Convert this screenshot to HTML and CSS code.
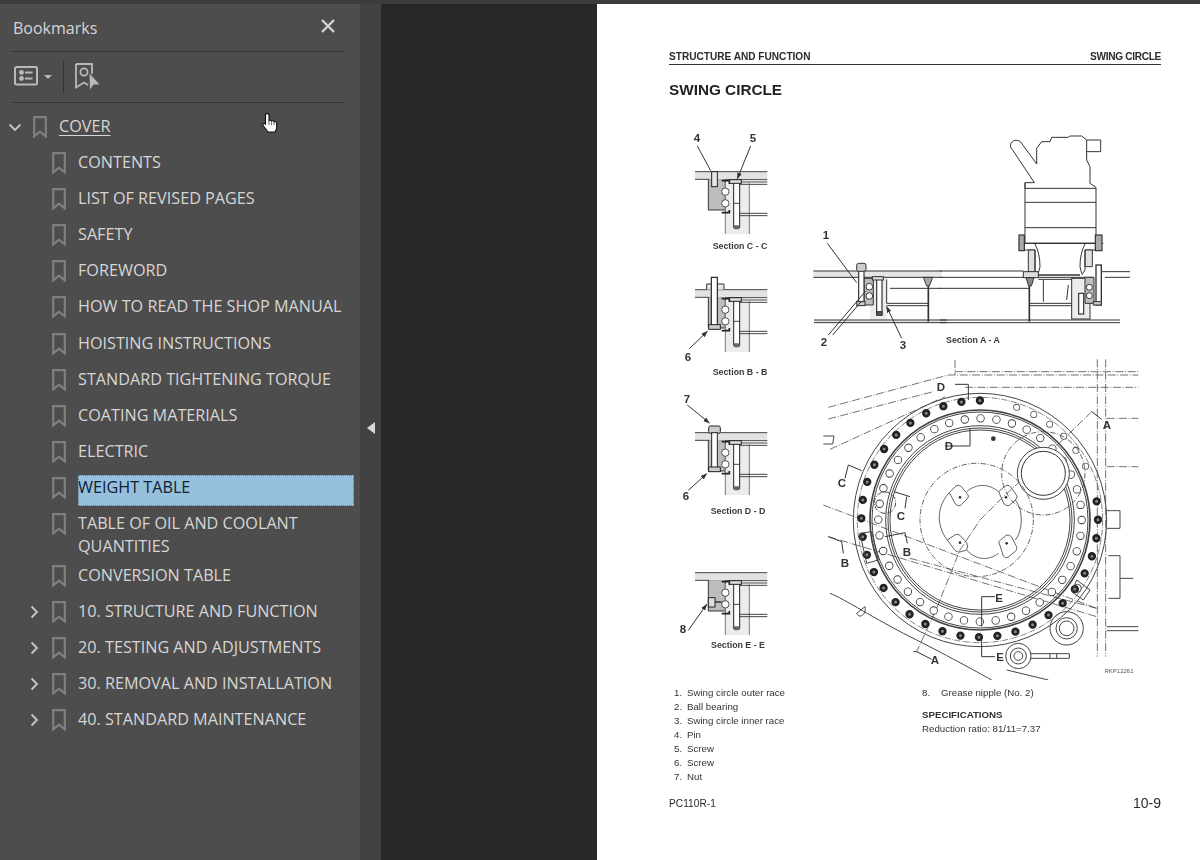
FILE: index.html
```html
<!DOCTYPE html>
<html lang="en">
<head>
<meta charset="utf-8">
<title>Bookmarks - Shop Manual</title>
<link rel="stylesheet" href="styles.css">
</head>
<body>
<svg class="defs" width="0" height="0" aria-hidden="true">
  <defs>
    <symbol id="bm" viewBox="0 0 14 22">
      <path d="M1.2 1.2H12.8V20.4L7 15.6 1.2 20.4Z" fill="none" stroke="#7f7f7f" stroke-width="2.2"/>
    </symbol>
    <marker id="ah" viewBox="0 0 10 10" refX="9" refY="5" markerWidth="20" markerHeight="20" orient="auto-start-reverse" markerUnits="userSpaceOnUse">
      <path d="M0 1.5L10 5 0 8.5Z" fill="#333"/>
    </marker>
    <g id="sec">
      <path d="M145 418H196V430H196V510H145Z" fill="#bdbdbd" stroke="#333" stroke-width="3"/>
      <rect x="196" y="430" width="72" height="152" fill="#ececec"/>
      <path d="M196 430V582M268 430V582" stroke="#777" stroke-width="3" fill="none"/>
      <rect x="105" y="395" width="217" height="24" fill="#e2e2e2"/>
      <path d="M105 395H322M105 418H148M196 419H322M240 426H322M240 433H322M240 520H322M240 527H322" stroke="#444" stroke-width="3" fill="none"/>
      <path d="M185 422H208V432M185 518H208V510" stroke="#222" stroke-width="5" fill="none"/>
      <circle cx="196" cy="455" r="11" fill="#fff" stroke="#333" stroke-width="2.5"/>
      <circle cx="196" cy="490" r="11" fill="#fff" stroke="#333" stroke-width="2.5"/>
      <rect x="221" y="420" width="18" height="142" fill="#fff" stroke="#222" stroke-width="3"/>
      <rect x="209" y="419" width="35" height="11" fill="#ddd" stroke="#222" stroke-width="3"/>
      <path d="M221 490H239" stroke="#222" stroke-width="2.5"/>
      <rect x="221" y="556" width="18" height="12" rx="4" fill="#666"/>
    </g>
  </defs>
</svg>

<div class="app">
  <div class="topbar"></div>
  <div class="main">
    <aside class="panel">
      <header class="panel-head">
        <h2 class="panel-title">Bookmarks</h2>
        <svg class="close" width="16" height="16" viewBox="0 0 16 16"><path d="M2 2L14 14M14 2L2 14" stroke="#d4d4d4" stroke-width="2.4" fill="none"/></svg>
      </header>
      <div class="toolbar">
        <svg class="tool-options" width="24" height="20" viewBox="0 0 24 20">
          <rect x="1" y="1" width="22" height="17.5" rx="1.5" fill="none" stroke="#b9b9b9" stroke-width="2"/>
          <circle cx="7.5" cy="6.5" r="2.4" fill="#b9b9b9"/><circle cx="7.5" cy="12.5" r="2.4" fill="#b9b9b9"/>
          <path d="M11 6.5H18.5M11 12.5H18.5" stroke="#b9b9b9" stroke-width="2"/>
        </svg>
        <span class="caret"></span>
        <span class="tool-sep"></span>
        <svg class="tool-find" width="25" height="27" viewBox="0 0 25 27">
          <path d="M1 1H17V11M1 1V24.500L9 19.500 13 22" fill="none" stroke="#b9b9b9" stroke-width="1.8"/>
          <circle cx="9" cy="9" r="3.6" fill="none" stroke="#b9b9b9" stroke-width="1.8"/>
          <path d="M14.500 10.500L24.500 21.500H18.500L15 26.500Z" fill="#b9b9b9"/>
        </svg>
      </div>
      <ul class="tree">
        <li class="row"><svg class="chev" width="18" height="18" viewBox="0 0 18 18"><path d="M3.5 6.5L9 12 14.500 6.500" fill="none" stroke="#c6c6c6" stroke-width="1.800"/></svg><svg class="bm"><use href="#bm"/></svg><a class="label label-link">COVER</a></li>
        <li class="row child"><span class="chev"></span><svg class="bm"><use href="#bm"/></svg><span class="label">CONTENTS</span></li>
        <li class="row child"><span class="chev"></span><svg class="bm"><use href="#bm"/></svg><span class="label">LIST OF REVISED PAGES</span></li>
        <li class="row child"><span class="chev"></span><svg class="bm"><use href="#bm"/></svg><span class="label">SAFETY</span></li>
        <li class="row child"><span class="chev"></span><svg class="bm"><use href="#bm"/></svg><span class="label">FOREWORD</span></li>
        <li class="row child"><span class="chev"></span><svg class="bm"><use href="#bm"/></svg><span class="label">HOW TO READ THE SHOP MANUAL</span></li>
        <li class="row child"><span class="chev"></span><svg class="bm"><use href="#bm"/></svg><span class="label">HOISTING INSTRUCTIONS</span></li>
        <li class="row child"><span class="chev"></span><svg class="bm"><use href="#bm"/></svg><span class="label">STANDARD TIGHTENING TORQUE</span></li>
        <li class="row child"><span class="chev"></span><svg class="bm"><use href="#bm"/></svg><span class="label">COATING MATERIALS</span></li>
        <li class="row child"><span class="chev"></span><svg class="bm"><use href="#bm"/></svg><span class="label">ELECTRIC</span></li>
        <li class="row child"><span class="chev"></span><svg class="bm"><use href="#bm"/></svg><span class="label label-selected">WEIGHT TABLE</span></li>
        <li class="row child"><span class="chev"></span><svg class="bm"><use href="#bm"/></svg><span class="label">TABLE OF OIL AND COOLANT QUANTITIES</span></li>
        <li class="row child"><span class="chev"></span><svg class="bm"><use href="#bm"/></svg><span class="label">CONVERSION TABLE</span></li>
        <li class="row child"><svg class="chev" width="18" height="18" viewBox="0 0 18 18"><path d="M6.500 3.500L12 9 6.500 14.500" fill="none" stroke="#c6c6c6" stroke-width="1.800"/></svg><svg class="bm"><use href="#bm"/></svg><span class="label">10. STRUCTURE AND FUNCTION</span></li>
        <li class="row child"><svg class="chev" width="18" height="18" viewBox="0 0 18 18"><path d="M6.500 3.500L12 9 6.500 14.500" fill="none" stroke="#c6c6c6" stroke-width="1.800"/></svg><svg class="bm"><use href="#bm"/></svg><span class="label">20. TESTING AND ADJUSTMENTS</span></li>
        <li class="row child"><svg class="chev" width="18" height="18" viewBox="0 0 18 18"><path d="M6.500 3.500L12 9 6.500 14.500" fill="none" stroke="#c6c6c6" stroke-width="1.800"/></svg><svg class="bm"><use href="#bm"/></svg><span class="label">30. REMOVAL AND INSTALLATION</span></li>
        <li class="row child"><svg class="chev" width="18" height="18" viewBox="0 0 18 18"><path d="M6.500 3.500L12 9 6.500 14.500" fill="none" stroke="#c6c6c6" stroke-width="1.800"/></svg><svg class="bm"><use href="#bm"/></svg><span class="label">40. STANDARD MAINTENANCE</span></li>
      </ul>
    </aside>
    <div class="strip"><span class="collapse"></span></div>
    <div class="canvas"></div>
    <main class="page">
      <div class="page-head"><span>STRUCTURE AND FUNCTION</span><span class="tight">SWING CIRCLE</span></div>
      <h1 class="page-title">SWING CIRCLE</h1>
      <svg class="figure" width="500" height="560" viewBox="660 120 500 560">
        <!-- small sections -->
        <g transform="translate(660 40) scale(.33333)">
          <use href="#sec"/>
          <rect x="155" y="395" width="17" height="45" fill="#e8e8e8" stroke="#222" stroke-width="3"/>
          <path d="M112 318L152 392M272 318L232 416" class="lead" marker-end="url(#ah)"/>
        </g>
        <g transform="translate(660 158) scale(.33333)">
          <use href="#sec"/>
          <path d="M140 395V378H192V395" fill="#e8e8e8" stroke="#333" stroke-width="3"/>
          <rect x="154" y="358" width="18" height="150" fill="#fff" stroke="#222" stroke-width="3.500"/>
          <rect x="146" y="500" width="35" height="14" fill="#ccc" stroke="#222" stroke-width="3"/>
          <path d="M88 572L142 520" class="lead" marker-end="url(#ah)"/>
        </g>
        <g transform="translate(660 301) scale(.33333)">
          <use href="#sec"/>
          <rect x="146" y="375" width="35" height="22" rx="5" fill="#ccc" stroke="#222" stroke-width="3"/>
          <rect x="155" y="395" width="17" height="105" fill="#fff" stroke="#222" stroke-width="3"/>
          <rect x="146" y="498" width="35" height="14" fill="#ccc" stroke="#222" stroke-width="3"/>
          <path d="M82 312L148 366" class="lead" marker-end="url(#ah)"/>
          <path d="M85 568L140 518" class="lead" marker-end="url(#ah)"/>
        </g>
        <g transform="translate(660 441) scale(.33333)">
          <use href="#sec"/>
          <rect x="145" y="470" width="20" height="28" fill="#ddd" stroke="#222" stroke-width="3"/>
          <path d="M165 483H185" stroke="#222" stroke-width="4"/>
          <path d="M85 568L140 490" class="lead" marker-end="url(#ah)"/>
        </g>

        <!-- section A-A, left -->
        <g transform="translate(660 40) scale(.33333)" class="ink">
          <rect x="630" y="712" width="50" height="130" fill="#ececec" stroke="none"/>
          <rect x="460" y="693" width="385" height="19" fill="#e6e6e6" stroke="none"/>
          <rect x="462" y="840" width="400" height="8" fill="#e6e6e6" stroke="none"/>
          <path d="M460 693H845M460 712H845M462 840H860M462 848H860M690 745H845M680 790H805M680 797H805M680 718V790" />
          <path d="M612 715H640V795H612Z" fill="#bdbdbd"/>
          <circle cx="628" cy="740" r="10" fill="#fff"/><circle cx="628" cy="768" r="10" fill="#fff"/>
          <rect x="596" y="680" width="16" height="115" fill="#fff" stroke-width="3.500"/>
          <rect x="590" y="670" width="28" height="24" rx="6" fill="#ccc"/>
          <rect x="590" y="785" width="25" height="12" fill="#ccc"/>
          <rect x="650" y="712" width="16" height="112" fill="#fff" stroke-width="3.500"/>
          <rect x="637" y="710" width="33" height="10" fill="#ddd"/>
          <rect x="650" y="815" width="16" height="11" fill="#555"/>
          <path d="M805 738V845" stroke-width="5"/>
          <path d="M790 712H818L808 738H800Z" fill="#aaa"/>
          <path d="M502 610L590 728M505 885L618 752M518 885L606 782M725 895L680 800" class="lead" marker-end="url(#ah)"/>
        </g>

        <!-- section A-A, right with drive -->
        <g transform="translate(940 40) scale(.33333)" class="ink">
          <path class="body" d="M255 610V428H283L218 330C200 315 222 290 242 306L290 372V325L305 305H330L335 292H385L390 288H425L440 300V360L450 380V430L468 442V610Z"/>
          <path d="M255 428V445H468M255 487H468M255 563H468M255 610H468"/>
          <path d="M440 300H482V335H440"/>
          <path d="M235 610H490M252 612V630H285M470 612V630H435"/>
          <path d="M265 630H285V695H265ZM435 630H457V680H435Z" fill="#e0e0e0"/>
          <path d="M285 630V695L295 705M435 630V690L425 705M285 612Q300 640 300 680L295 700M435 612Q420 640 420 680L425 700"/>
          <rect x="237" y="585" width="16" height="47" fill="#aaa" stroke-width="3.500"/>
          <rect x="466" y="585" width="20" height="47" fill="#aaa" stroke-width="3.500"/>
          <path d="M0 693H250M0 712H250M0 745H270M480 695H570M495 712H570" />
          <rect x="250" y="695" width="45" height="18" fill="#ddd"/>
          <path d="M295 705H420" stroke-width="5"/>
          <path d="M295 712H460M295 718H420" />
          <path d="M258 713H282L274 738H266Z" fill="#888"/>
          <path d="M268 738V845" stroke-width="5"/>
          <path d="M270 790H395M270 797H395M310 720V785M385 735L380 780" />
          <rect x="395" y="715" width="55" height="122" fill="#ececec"/>
          <path d="M435 712H462V790H435Z" fill="#bdbdbd"/>
          <circle cx="448" cy="742" r="9" fill="#fff"/><circle cx="448" cy="767" r="9" fill="#fff"/>
          <rect x="416" y="760" width="15" height="62" fill="#fff" stroke-width="3.500"/>
          <rect x="468" y="675" width="16" height="120" fill="#fff" stroke-width="4"/>
          <rect x="460" y="785" width="24" height="10" fill="#ccc"/>
          <path d="M0 840H540M0 848H540"/>
        </g>

        <!-- plan view -->
        <g transform="translate(810 350) scale(.33333)" class="plan">
          <path class="dd" d="M55 172L415 75H985M435 30V75M435 65H985M55 207L370 125M60 298L405 140M465 112H985M862 28V920M887 28V920M890 205H985M890 350H985M40 465L860 775M55 560L860 800M300 625L860 775M845 185L640 385 580 440 510 510 450 600 380 775 320 905"/>
          <g fill="none" stroke="#444">
            <circle cx="510" cy="510" r="380" stroke-width="3"/>
            <circle cx="510" cy="510" r="368" stroke-width="2" stroke-dasharray="18 4 3 4"/>
            <circle cx="510" cy="510" r="330" stroke-width="5"/>
            <circle cx="510" cy="510" r="324" stroke-width="3"/>
            <circle cx="510" cy="510" r="283" stroke-width="3"/>
            <circle cx="510" cy="510" r="276" stroke-width="3"/>
            <circle cx="510" cy="510" r="270" stroke-width="3"/>
          </g>
          <!-- outer bolt holes -->
          <g fill="none" stroke-linecap="round">
            <path d="M860 454A355 355 0 1 1 565 156" pathLength="32" stroke="#222" stroke-width="25" stroke-dasharray="0 1"/>
            <path d="M860 454A355 355 0 1 1 565 156" pathLength="32" stroke="#8a8a8a" stroke-width="9" stroke-dasharray="0 1"/>
            <path d="M620 172A355 355 0 0 1 848 400" pathLength="6" stroke="#555" stroke-width="21" stroke-dasharray="0 1"/>
            <path d="M620 172A355 355 0 0 1 848 400" pathLength="6" stroke="#fff" stroke-width="16" stroke-dasharray="0 1"/>
            <circle cx="510" cy="510" r="305" pathLength="40" stroke="#333" stroke-width="25" stroke-dasharray="0 1"/>
            <circle cx="510" cy="510" r="305" pathLength="40" stroke="#fff" stroke-width="20" stroke-dasharray="0 1"/>
          </g>
          <circle cx="700" cy="370" r="125" fill="none" stroke="#444" stroke-width="2.500" stroke-dasharray="16 5 3 5"/>
          <circle cx="700" cy="370" r="78" fill="#fff" stroke="#444" stroke-width="3"/>
          <circle cx="700" cy="370" r="66" fill="#fff" stroke="#333" stroke-width="3"/>
          <g fill="none" stroke="#444" stroke-width="2.500" stroke-linejoin="round">
            <circle cx="500" cy="510" r="170" stroke-dasharray="16 5 3 5"/>
            <path d="M418 428C378 470 380 530 412 570M470 425C500 400 535 400 566 425M616 450C640 480 640 540 616 570M470 600C500 632 535 632 566 610"/>
            <path d="M418 428L438 408Q446 402 454 410L474 434Q478 442 470 448L452 466Q444 470 436 462Z"/>
            <path d="M566 425L586 408Q594 402 602 410L620 436Q624 444 616 450L598 466Q590 470 582 462Z"/>
            <path d="M412 570L436 554Q444 550 452 558L470 578Q476 586 470 600L450 606Q440 608 434 600Z"/>
            <path d="M566 575L588 556Q596 552 604 560L620 590Q622 600 616 604L594 622Q586 626 580 618Z"/>
          </g>
          <circle cx="450" cy="442" r="4" fill="#333"/><circle cx="588" cy="442" r="4" fill="#333"/><circle cx="450" cy="578" r="4" fill="#333"/><circle cx="590" cy="580" r="4" fill="#333"/>
          <circle cx="550" cy="266" r="7" fill="#333"/>
          <g fill="none" stroke="#444" stroke-width="3">
            <circle cx="225" cy="458" r="32" stroke-dasharray="14 4 3 4"/>
            <path d="M890 482H930V535H890M895 617H930V745H895M930 685H970M40 258H72L68 282H40"/>
            <circle cx="770" cy="835" r="50"/><circle cx="770" cy="835" r="32"/><circle cx="770" cy="835" r="22"/>
            <circle cx="625" cy="918" r="38"/><circle cx="625" cy="918" r="24"/><circle cx="625" cy="918" r="13"/>
            <path d="M663 911H778V925H663M720 911V925M740 911V925"/>
            <path d="M60 730C100 745 200 810 300 860S500 965 545 990M590 960L715 990M165 770C170 790 150 810 140 790Z"/>
            <path d="M800 690L840 720 820 750 785 725Z"/>
            <circle cx="802" cy="715" r="12"/>
            <path d="M150 550L185 545 205 630 170 640Z"/>
            <path d="M890 830H985M890 842H985"/>
          </g>
          <path d="M435 103H475V150M405 288H480V235M115 345L155 362M115 345L105 385M300 440L252 425M290 440L285 475M285 548L225 560M285 548L292 580M95 575L55 560M95 575L100 610M515 740H555M515 740V830M515 920H555M515 870V920M320 905L365 928M320 905L310 905M845 185L875 208" class="arrows" />
        </g>

        <text x="697" y="138" class="num">4</text><text x="753" y="138" class="num">5</text>
        <text x="826" y="235" class="num">1</text><text x="824" y="342" class="num">2</text><text x="903" y="345" class="num">3</text>
        <text x="688" y="357" class="num">6</text><text x="687" y="399" class="num">7</text><text x="686" y="496" class="num">6</text><text x="683" y="629" class="num">8</text>
        <text x="740" y="246" class="cap">Section C - C</text><text x="740" y="372" class="cap">Section B - B</text>
        <text x="738" y="511" class="cap">Section D - D</text><text x="738" y="645" class="cap">Section E - E</text><text x="973" y="340" class="cap">Section A - A</text>
        <text x="941" y="387" class="num">D</text><text x="949" y="446" class="num">D</text><text x="1107" y="425" class="num">A</text>
        <text x="842" y="483" class="num">C</text><text x="901" y="516" class="num">C</text><text x="907" y="552" class="num">B</text><text x="845" y="563" class="num">B</text>
        <text x="999" y="598" class="num">E</text><text x="1000" y="657" class="num">E</text><text x="935" y="660" class="num">A</text>
        <text x="1119" y="671" class="code">RKP12261</text>
      </svg>
      <div class="notes">
        <ol class="parts">
          <li><span>1.</span>Swing circle outer race</li>
          <li><span>2.</span>Ball bearing</li>
          <li><span>3.</span>Swing circle inner race</li>
          <li><span>4.</span>Pin</li>
          <li><span>5.</span>Screw</li>
          <li><span>6.</span>Screw</li>
          <li><span>7.</span>Nut</li>
        </ol>
        <div class="specs">
          <p class="spec-item"><span>8.</span>Grease nipple (No. 2)</p>
          <p class="spec-head">SPECIFICATIONS</p>
          <p>Reduction ratio: 81/11=7.37</p>
        </div>
      </div>
      <footer class="page-foot"><span>PC110R-1</span><span class="folio">10-9</span></footer>
    </main>
  </div>
  <svg class="cursor" width="20" height="22" viewBox="261 112 20 22">
    <path d="M265.500 115.500c0-2.800 3.500-2.800 3.500 0v5c1-.6 2.400-.3 2.600.5 1-.5 2.300-.2 2.500.7 1-.5 2.600 0 2.600 1.500v4c0 2-1 3.700-1.800 4.800h-7c-1-1.600-3-4-4.700-6.500-.9-1.500.6-2.700 1.800-1.800l.5.500z" fill="#fff" stroke="#111" stroke-width="1.100"/>
    <path d="M269 121v4M271.600 121.500v3.500M274.100 122v3" stroke="#333" stroke-width=".8" fill="none"/>
  </svg>
</div>
</body>
</html>
```

FILE: styles.css
```css
* { box-sizing: border-box; }
html, body { margin: 0; height: 100%; }
body { overflow: hidden; background: #282828; font-family: "Open Sans", "Noto Sans", sans-serif; }
.defs { display: block; height: 0; }
.app { position: relative; width: 1200px; height: 860px; display: flex; flex-direction: column; }
.topbar { height: 4px; background: #3c3c3c; flex: none; }
.main { flex: 1; display: flex; min-height: 0; }

/* bookmarks panel */
.panel { width: 360px; flex: none; background: #4d4d4d; padding: 0 6px 0 0; }
.panel-head { height: 48px; margin: 0 9px 0 12px; padding: 7px 0 0 1px; display: flex; justify-content: space-between; border-bottom: 1px solid #333; }
.panel-title { margin: 0; font-size: 16px; line-height: 34px; font-weight: 400; color: #d6d6d6; }
.close { margin: 7px 9px 0 0; }
.toolbar { height: 51px; margin: 0 9px 0 12px; padding-left: 2px; display: flex; align-items: center; border-bottom: 1px solid #333; }
.tool-options { flex: none; margin-top: -2px; }
.caret { margin-left: 6px; width: 0; height: 0; border: 4px solid transparent; border-top-color: #b9b9b9; border-bottom: 0; }
.tool-sep { margin-left: 11px; width: 1px; height: 32px; background: #333; }
.tool-find { margin-left: 11px; margin-top: -2px; }
.tree { list-style: none; margin: 6px 0 0; padding: 0; }
.row { display: flex; align-items: flex-start; min-height: 36.100px; padding: 6px 0 0 6px; }
.row.child { padding-left: 25px; }
.chev { flex: none; width: 18px; height: 18px; margin-top: 3px; display: block; }
.bm { flex: none; width: 14px; height: 22px; margin: 1px 12px 0 9px; display: block; }
.row.child .bm { margin-left: 8.500px; margin-right: 12.500px; }
.label { flex: 1; min-width: 0; font-size: 16.200px; line-height: 23px; color: #d6d6d6; padding-right: 6px; }
.label-link { flex: none; text-decoration: underline; text-underline-offset: 3px; }
.label-selected { background: #97c0dc; color: #0c2236; margin-top: -1px; padding: 1px 0 7px; outline: 1px dotted #5c7688; outline-offset: -1px; }

.strip { width: 21px; flex: none; background: #424242; display: flex; align-items: center; justify-content: center; padding-bottom: 8px; }
.collapse { width: 0; height: 0; border: 6px solid transparent; border-right: 8px solid #d6d6d6; border-left: 0; }
.canvas { width: 216px; flex: none; background: #282828; }

/* document page */
.page { flex: 1; background: #fff; padding: 46px 39px 0 72px; color: #2b2b2b; font-family: "Liberation Sans", Arial, sans-serif; filter: blur(.4px); }
.page-head { display: flex; justify-content: space-between; font-size: 10.100px; line-height: 13px; font-weight: 700; border-bottom: 1.500px solid #333; height: 15px; }
.tight { letter-spacing: -.3px; }
.page-title { margin: 16px 0 0; font-size: 15.300px; line-height: 18px; font-weight: 700; color: #222; }
.figure { display: block; margin: 21px 0 0 -9px; }
.ink { fill: none; stroke: #333; stroke-width: 3; }
.ink .body { fill: #fff; }
.lead { fill: none; stroke: #333; stroke-width: 3; }
.plan .dd { fill: none; stroke: #555; stroke-width: 2.500; stroke-dasharray: 24 5 3 5; }
.arrows { fill: none; stroke: #333; stroke-width: 3; }
.num { font-size: 11.500px; font-weight: 700; fill: #333; text-anchor: middle; dominant-baseline: central; }
.cap { font-size: 8.800px; font-weight: 700; fill: #3a3a3a; text-anchor: middle; dominant-baseline: central; }
.code { font-size: 6px; fill: #555; text-anchor: middle; dominant-baseline: central; }
.notes { display: flex; margin-top: 6px; font-size: 9.700px; line-height: 14px; color: #333; }
.parts { list-style: none; margin: 0; padding: 0 0 0 5px; width: 253px; flex: none; }
.parts span { display: inline-block; width: 13px; }
.specs p { margin: 0; }
.spec-item span { display: inline-block; width: 19px; }
.spec-head { font-weight: 700; margin-top: 8px !important; }
.page-foot { display: flex; justify-content: space-between; align-items: center; margin-top: 11px; font-size: 10.200px; }
.folio { font-size: 14px; }

.cursor { position: absolute; left: 261px; top: 112px; }
```
